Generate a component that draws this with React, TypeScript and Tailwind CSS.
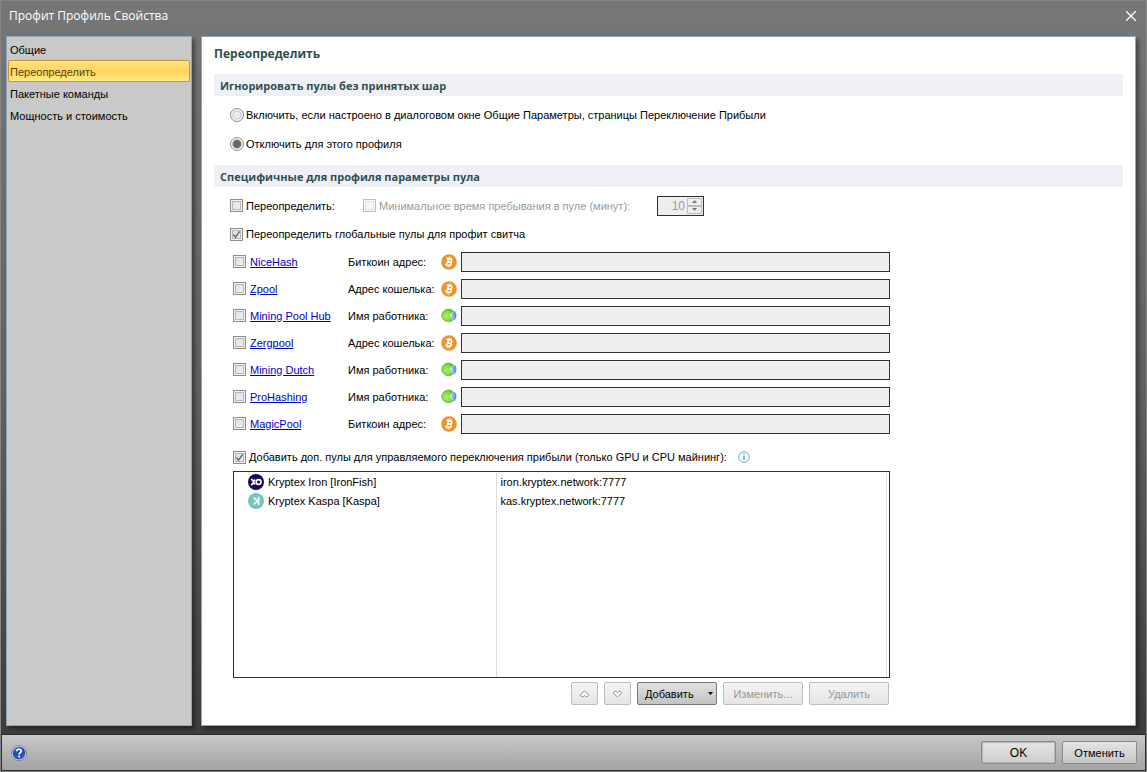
import React, { useState } from "react";

const navItems = ["Общие", "Переопределить", "Пакетные команды", "Мощность и стоимость"];

type Pool = { name: string; label: string; icon: "btc" | "worker" };

const pools: Pool[] = [
  { name: "NiceHash", label: "Биткоин адрес:", icon: "btc" },
  { name: "Zpool", label: "Адрес кошелька:", icon: "btc" },
  { name: "Mining Pool Hub", label: "Имя работника:", icon: "worker" },
  { name: "Zergpool", label: "Адрес кошелька:", icon: "btc" },
  { name: "Mining Dutch", label: "Имя работника:", icon: "worker" },
  { name: "ProHashing", label: "Имя работника:", icon: "worker" },
  { name: "MagicPool", label: "Биткоин адрес:", icon: "btc" },
];

function BitcoinIcon() {
  return (
    <svg className="size-4 shrink-0" viewBox="0 0 16 16" aria-hidden="true">
      <circle cx="8" cy="8" r="7.8" fill="#f0922b" />
      <g transform="rotate(14 8 8)" fill="none" stroke="#fff">
        <path d="M6.6 4.5V11.5M6.6 4.8H8.9A1.5 1.5 0 0 1 8.9 7.9H6.6M9 7.9A1.65 1.65 0 0 1 9 11.2H6.6M4.8 4.8H6.6M4.8 11.2H6.6" strokeWidth="1.6" />
        <path d="M7.1 2.8V4.8M9 2.8V4.8M7.1 11.2V13.2M9 11.2V13.2" strokeWidth="1.1" />
      </g>
    </svg>
  );
}

function WorkerIcon() {
  return (
    <svg className="size-4 shrink-0" viewBox="0 0 16 16" aria-hidden="true">
      <defs>
        <radialGradient id="leaf" cx="0.35" cy="0.55" r="0.75">
          <stop offset="0" stopColor="#b4ee55" />
          <stop offset="0.55" stopColor="#7bd945" />
          <stop offset="1" stopColor="#3f9a35" />
        </radialGradient>
        <linearGradient id="drop" x1="0" x2="1">
          <stop offset="0" stopColor="#a9d2fa" />
          <stop offset="1" stopColor="#4a86dc" />
        </linearGradient>
      </defs>
      <ellipse cx="7.5" cy="7.4" rx="6.8" ry="6.3" fill="url(#leaf)" stroke="#5a9a50" strokeWidth="0.6" />
      <path d="M8.6 7.2 12.4 3.2 14.8 4 14.8 12 12.6 12.8Z" fill="#d9f2ee" />
      <path d="M10.2 7.6C10.4 5 12 2.9 13.6 2.9C16 4.6 16.1 9.8 13.2 12.4C11.2 11.5 10.2 9.6 10.2 7.6Z" fill="url(#drop)" />
    </svg>
  );
}

function IronFishIcon() {
  return (
    <svg className="size-4 shrink-0" viewBox="0 0 16 16" aria-hidden="true">
      <circle cx="8" cy="8" r="8" fill="#150f52" />
      <path d="M2.9 5.2C4 5.4 5.2 6.4 5.6 8C5.2 9.6 4 10.6 2.9 10.8M7.2 5.6C6.4 6.2 5.8 7 5.6 8C5.8 9 6.4 9.8 7.2 10.4" fill="none" stroke="#fff" strokeWidth="1.5" />
      <circle cx="10.6" cy="8" r="2.4" fill="none" stroke="#fff" strokeWidth="1.6" />
    </svg>
  );
}

function KaspaIcon() {
  return (
    <svg className="size-4 shrink-0" viewBox="0 0 16 16" aria-hidden="true">
      <circle cx="8" cy="8" r="8" fill="#70c7ba" />
      <path d="M10.6 4V12M9.8 8 5.6 4.7M9.8 8 5.6 11.3" fill="none" stroke="#fff" strokeWidth="1.6" />
    </svg>
  );
}

function HelpIcon() {
  return (
    <svg className="size-4" viewBox="0 0 16 16" aria-hidden="true">
      <defs>
        <linearGradient id="help" x1="0" y1="0" x2="0.6" y2="1">
          <stop offset="0" stopColor="#7594dc" />
          <stop offset="0.45" stopColor="#2448ae" />
          <stop offset="1" stopColor="#2d58c5" />
        </linearGradient>
      </defs>
      <circle cx="8" cy="8" r="7.6" fill="#d9dde4" stroke="#777b83" strokeWidth="0.8" />
      <circle cx="8" cy="8" r="6.4" fill="url(#help)" />
      <path d="M5.8 6.2C5.8 3.6 10.3 3.6 10.3 6.1C10.3 7.7 8.1 7.6 8.1 9.6" fill="none" stroke="#fff" strokeWidth="1.7" />
      <rect x="7.2" y="10.6" width="1.8" height="1.8" fill="#fff" />
    </svg>
  );
}

function CheckBox({ id, label, disabled, defaultChecked }: { id: string; label?: string; disabled?: boolean; defaultChecked?: boolean }) {
  return (
    <span className="grid size-[13px] shrink-0">
      <input
        id={id}
        type="checkbox"
        aria-label={label}
        disabled={disabled}
        defaultChecked={defaultChecked}
        className="peer col-start-1 row-start-1 size-[13px] appearance-none border border-[#8b8d8f] bg-linear-to-br from-[#dcdcdc] to-[#f4f4f4] shadow-[inset_0_0_0_1px_#f2f2f2,inset_0_0_0_2px_#b5b7ba] disabled:border-[#bcbcbc] disabled:from-[#f4f4f4] disabled:to-[#fafafa] disabled:shadow-[inset_0_0_0_1px_#fafafa,inset_0_0_0_2px_#dedede]"
      />
      <svg viewBox="0 0 13 13" className="pointer-events-none invisible col-start-1 row-start-1 size-[13px] peer-checked:visible" aria-hidden="true">
        <path d="M3.4 6.6 5.6 9.2 9.6 3.4" fill="none" stroke="#6a6d71" strokeWidth="1.6" />
      </svg>
    </span>
  );
}

function Radio({ id, defaultChecked }: { id: string; defaultChecked?: boolean }) {
  return (
    <input
      id={id}
      type="radio"
      name="ignore"
      defaultChecked={defaultChecked}
      className="size-[14px] shrink-0 appearance-none rounded-full border border-[#8c8e90] bg-[radial-gradient(circle,#ececec_0_3px,#c8c8c8_4px,#f4f4f4_5px)] checked:bg-[radial-gradient(circle,#66676a_0_3px,#808183_4px,#f4f4f4_5px)]"
    />
  );
}

function SectionBar({ children }: { children: React.ReactNode }) {
  return (
    <h2 className="flex h-[22px] items-center bg-[#eff0f6] px-1.5 pt-px font-['Open_Sans','Noto_Sans',sans-serif] text-[11px] font-bold text-[#2f4f4f]">
      {children}
    </h2>
  );
}

const smallButton =
  "flex h-[23px] items-center justify-center rounded-[2px] border border-[#bdbdbd] bg-linear-to-b from-[#f4f4f4] to-[#e5e5e5] text-[#969696]";

export default function App() {
  const [active, setActive] = useState(1);

  return (
    <div className="flex min-h-screen flex-col border border-[#858585] bg-linear-to-b from-[#777777] via-[#626262] to-[#3a3a3a] font-['Liberation_Sans',Arial,sans-serif] text-[11px] leading-[14px] text-black">
      <header className="flex h-[30px] items-center justify-between bg-[#767676] pr-[7px] pl-2 text-white">
        <h1 className="font-['Open_Sans','Noto_Sans',sans-serif] text-[12px]">Профит Профиль Свойства</h1>
        <button aria-label="Закрыть" className="flex size-4 items-center justify-center">
          <svg viewBox="0 0 12 12" className="size-3" aria-hidden="true">
            <path d="M1.2 1.2 10.8 10.8M10.8 1.2 1.2 10.8" stroke="#fff" strokeWidth="1.3" />
          </svg>
        </button>
      </header>

      <div className="flex flex-1 gap-[9px] pt-[5px] pr-2.5 pb-2 pl-[5px]">
        <nav className="w-[186px] shrink-0 border border-[#8ba6bd] bg-[#c9c9c9] px-px py-px shadow-[3px_3px_4px_rgba(0,0,0,0.4)]">
          <ul>
            {navItems.map((item, i) => (
              <li key={item}>
                <button
                  onClick={() => setActive(i)}
                  className={
                    i === active
                      ? "block h-[22px] w-full rounded-[2px] border border-[#c2963a] bg-linear-to-b from-[#ffe387] via-[#ffd559] to-[#ffeb80] px-px pt-0.5 text-left text-[#57461b]"
                      : "block h-[22px] w-full border border-transparent px-px pt-0.5 text-left"
                  }
                >
                  {item}
                </button>
              </li>
            ))}
          </ul>
        </nav>

        <main className="min-w-0 flex-1 border border-[#8ba6bd] bg-white px-3 pb-5 shadow-[3px_3px_4px_rgba(0,0,0,0.4)]">
          <h2 className="mb-[3px] flex h-[34px] items-center font-['Open_Sans','Noto_Sans',sans-serif] text-[12px] font-bold text-[#2f4f4f]">
            Переопределить
          </h2>

          <SectionBar>Игнорировать пулы без принятых шар</SectionBar>
          <div className="pt-1 pl-4">
            <div className="flex h-[29px] items-center gap-0.5">
              <Radio id="enable" />
              <label htmlFor="enable">Включить, если настроено в диалоговом окне Общие Параметры, страницы Переключение Прибыли</label>
            </div>
            <div className="flex h-[29px] items-center gap-0.5">
              <Radio id="disable" defaultChecked />
              <label htmlFor="disable">Отключить для этого профиля</label>
            </div>
          </div>

          <div className="mt-[7px]">
            <SectionBar>Специфичные для профиля параметры пула</SectionBar>
          </div>
          <div className="pt-1 pl-4">
            <div className="flex h-[29px] items-center">
              <div className="flex w-[133px] items-center gap-[3px]">
                <CheckBox id="override" />
                <label htmlFor="override">Переопределить:</label>
              </div>
              <div className="flex w-[294px] items-center gap-[3px] text-[#9b9b9b]">
                <CheckBox id="mintime" disabled />
                <label htmlFor="mintime">Минимальное время пребывания в пуле (минут):</label>
              </div>
              <div className="flex h-5 w-[47px] items-center border border-[#303030] bg-[#eeeeee] pr-px">
                <input
                  aria-label="Минуты"
                  defaultValue="10"
                  disabled
                  className="w-0 min-w-0 flex-1 bg-transparent pr-0.5 text-right text-[12px] text-[#9b9b9b]"
                />
                <div className="flex flex-col">
                  <button aria-label="Больше" disabled className="flex h-2 w-[15px] items-center justify-center border border-[#bdbdbd] bg-[#efefef]">
                    <svg viewBox="0 0 5 3" className="h-[3px] w-[5px]" aria-hidden="true"><path d="M0 3 2.5 0 5 3Z" fill="#777" /></svg>
                  </button>
                  <button aria-label="Меньше" disabled className="flex h-2 w-[15px] items-center justify-center border border-[#bdbdbd] bg-[#efefef]">
                    <svg viewBox="0 0 5 3" className="h-[3px] w-[5px]" aria-hidden="true"><path d="M0 0 2.5 3 5 0Z" fill="#777" /></svg>
                  </button>
                </div>
              </div>
            </div>
            <div className="flex h-7 items-center gap-[3px]">
              <CheckBox id="global" defaultChecked />
              <label htmlFor="global">Переопределить глобальные пулы для профит свитча</label>
            </div>
          </div>

          <div className="ml-[19px] max-w-[657px]">
            {pools.map((pool) => (
              <div key={pool.name} className="flex h-[27px] items-center">
                <div className="flex w-[115px] shrink-0 items-center gap-1">
                  <CheckBox id={"use-" + pool.name} label={pool.name} />
                  <a href="#" className="whitespace-nowrap text-[#0000cc] underline">{pool.name}</a>
                </div>
                <label htmlFor={"value-" + pool.name} className="w-[93px] shrink-0 whitespace-nowrap">{pool.label}</label>
                {pool.icon === "btc" ? <BitcoinIcon /> : <WorkerIcon />}
                <input id={"value-" + pool.name} className="ml-1 h-5 min-w-0 flex-1 border border-[#303030] bg-[#efefef] px-1" />
              </div>
            ))}

            <div className="mt-1.5 flex h-7 items-center gap-[3px]">
              <CheckBox id="extra" defaultChecked />
              <label htmlFor="extra">Добавить доп. пулы для управляемого переключения прибыли (только GPU и CPU майнинг):</label>
              <svg viewBox="0 0 12 12" className="ml-2 size-3" aria-hidden="true">
                <circle cx="6" cy="6" r="5.3" fill="#f6fbff" stroke="#6c9dca" strokeWidth="0.9" />
                <path d="M6 5V9M6 2.8V4" stroke="#4681b8" strokeWidth="1.1" />
              </svg>
            </div>

            <div className="flex min-h-[207px] border border-[#303030] pt-px pr-0.5">
              <table className="w-full border-r border-[#dcdcdc]">
                <tbody className="align-top">
                  <tr className="h-[19px]">
                    <td className="w-[262px] border-r border-[#dcdcdc] pt-px pl-3.5">
                      <span className="flex items-center gap-1"><IronFishIcon />Kryptex Iron [IronFish]</span>
                    </td>
                    <td className="pt-0.5 pl-1">iron.kryptex.network:7777</td>
                  </tr>
                  <tr className="h-[19px]">
                    <td className="border-r border-[#dcdcdc] pt-px pl-3.5">
                      <span className="flex items-center gap-1"><KaspaIcon />Kryptex Kaspa [Kaspa]</span>
                    </td>
                    <td className="pt-0.5 pl-1">kas.kryptex.network:7777</td>
                  </tr>
                  <tr>
                    <td className="border-r border-[#dcdcdc]" />
                    <td />
                  </tr>
                </tbody>
              </table>
            </div>

            <div className="mt-1 flex justify-end gap-1.5 pr-px">
              <button aria-label="Вверх" disabled className={smallButton + " w-[27px]"}>
                <svg viewBox="0 0 11 8" className="h-2 w-[11px]" aria-hidden="true">
                  <path d="M5.5 1 9.8 5 8.3 6.8 7 6.8 5.5 5.4 4 6.8 2.7 6.8 1.2 5Z" fill="#fff" stroke="#888" strokeWidth="0.9" />
                </svg>
              </button>
              <button aria-label="Вниз" disabled className={smallButton + " w-[27px]"}>
                <svg viewBox="0 0 11 8" className="h-2 w-[11px]" aria-hidden="true">
                  <path d="M5.5 7 9.8 3 8.3 1.2 7 1.2 5.5 2.6 4 1.2 2.7 1.2 1.2 3Z" fill="#fff" stroke="#888" strokeWidth="0.9" />
                </svg>
              </button>
              <button className="flex h-[23px] w-20 items-center justify-between rounded-[2px] border border-[#777777] bg-linear-to-b from-[#e2e2e2] to-[#c2c2c2] pr-[3px] pl-[7px]">
                Добавить
                <svg viewBox="0 0 5 3" className="h-[3px] w-[5px]" aria-hidden="true"><path d="M0 0H5L2.5 3Z" /></svg>
              </button>
              <button disabled className={smallButton + " w-20"}>Изменить...</button>
              <button disabled className={smallButton + " w-20"}>Удалить</button>
            </div>
          </div>
        </main>
      </div>

      <footer className="flex h-[37px] items-center justify-between border border-[#2c2c2c] bg-linear-to-b from-[#c8c8c8] to-[#a3a3a3] pr-2 pl-[9px]">
        <button aria-label="Справка" className="size-4">
          <HelpIcon />
        </button>
        <div className="flex gap-1.5 text-[12px]">
          <button className="h-[23px] w-[75px] rounded-[2px] border border-[#8b8b8b] bg-linear-to-b from-[#e4e4e4] to-[#cdcdcd] shadow-[inset_0_0_0_1px_#b5b5b5]">OK</button>
          <button className="h-[23px] w-[75px] rounded-[2px] border border-[#8b8b8b] bg-linear-to-b from-[#e4e4e4] to-[#c6c6c6] text-[11px]">Отменить</button>
        </div>
      </footer>
    </div>
  );
}
